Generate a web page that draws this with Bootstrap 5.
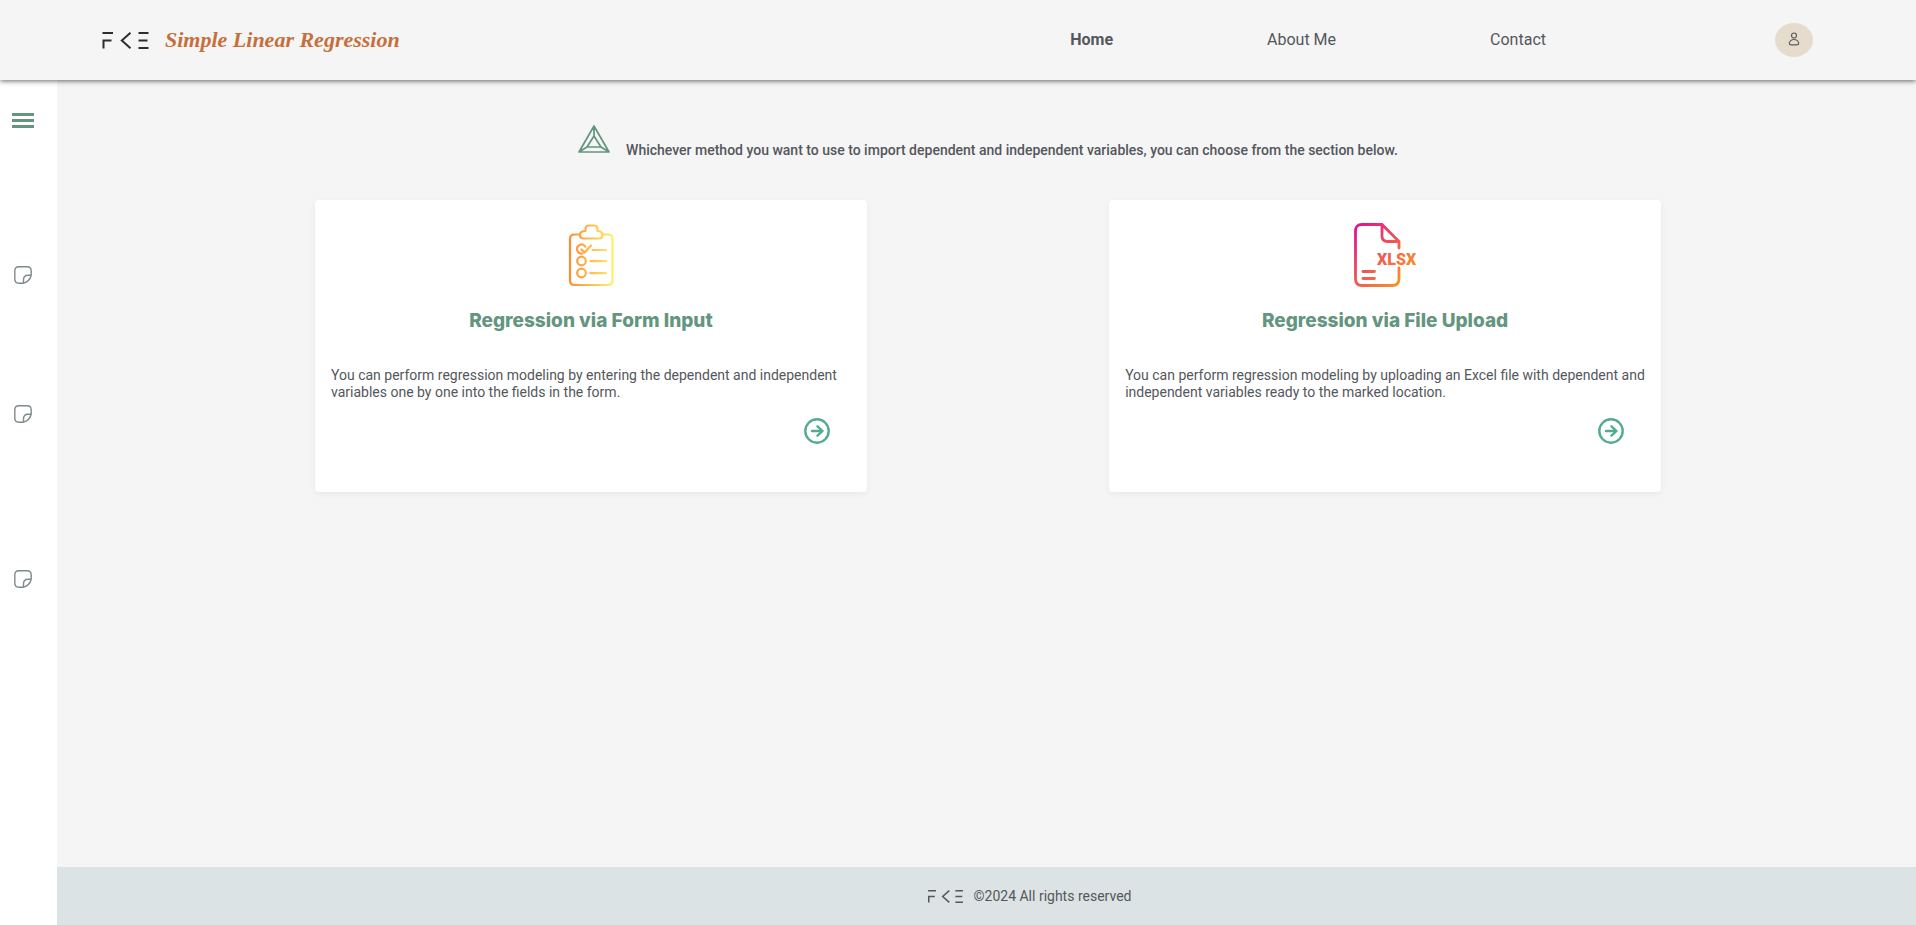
<!DOCTYPE html>
<html lang="en">
<head>
<meta charset="utf-8">
<meta name="viewport" content="width=device-width, initial-scale=1">
<title>Simple Linear Regression</title>
<link href="https://cdn.jsdelivr.net/npm/bootstrap@5.3.0/dist/css/bootstrap.min.css" rel="stylesheet">
<style>
  body { font-family: Roboto, sans-serif; font-size: 14px; line-height: 17px; color: #54575c; background: #f5f5f5; }
  svg { display: block; flex: none; }
  .site-header { min-height: 80px; padding: 0 103px 0 102px; background: #f5f5f5; box-shadow: 0 1px 5px rgba(0,0,0,.6); z-index: 2; }
  .brand-name { font-family: "Liberation Serif", serif; font-style: italic; font-weight: 700; font-size: 22px; line-height: 32px; color: #c66f3d; }
  .brand-link { gap: 16px; color: #2c2e30; }
  .main-nav { gap: 154px; margin-right: 229px; font-size: 16px; line-height: 24px; }
  .main-nav a { color: #54575c; }
  .profile-btn { width: 38px; height: 34px; padding: 0 0 3px; background: #e5dccd; border-radius: 50%; color: #5a5d60; }
  .side { width: 57px; padding: 32px 12px; background: #fff; }
  .side button { color: #7f8a8c; }
  .side .menu-toggle { color: #64957f; margin-bottom: 137px; }
  .side ul { width: 22px; gap: 121px; }
  .side li:last-child { margin-top: 26px; }
  .page-main { padding: 0 8px 0 11px; }
  .intro { gap: 16px; padding-top: 44px; font-weight: 500; }
  .intro p { padding-top: 18px; }
  .intro svg { color: #64957f; }
  .choices { max-width: 1346px; margin-top: 41px; }
  .choice { width: 41%; min-height: 292px; padding: 23px 16px 32px; border: 0; border-radius: 4px; box-shadow: 0 2px 6px rgba(0,0,0,.06); }
  .choice h2 { margin: 20px 0 32px; font: 800 19px/28px Inter, sans-serif; color: #64957f; }
  .choice .go { margin: 17px 21px 0 0; color: #54ab90; }
  .site-footer { min-height: 58px; gap: 11px; padding: 1px 0 0 86px; background: #dce3e4; }
</style>
</head>
<body class="d-flex flex-column min-vh-100">
<svg width="0" height="0" class="position-absolute" aria-hidden="true">
  <defs>
    <symbol id="logo" viewBox="0 0 46 17">
      <g fill="none" stroke="currentColor" stroke-width="2">
        <path d="M0 1h10.500M1 16.500V8.500H9M28 .8 19.300 8.500 28 16.200M36 1h10M36 8.500h9M36 16h10"/>
      </g>
    </symbol>
    <symbol id="note" viewBox="0 0 18 18">
      <g fill="none" stroke="currentColor" stroke-width="1.400" stroke-linejoin="round">
        <path d="M17.200 9.200V5Q17.200.8 13 .8H5Q.8.8.8 5V13Q.8 17.200 5 17.200H9.500C13 16.200 16.200 13 17.200 9.200ZM9.500 17.200V14Q9.500 9.200 14 9.200H17.200"/>
      </g>
    </symbol>
    <symbol id="arrow" viewBox="0 0 26 26">
      <g fill="none" stroke="currentColor" stroke-width="2.400" stroke-linecap="round" stroke-linejoin="round">
        <circle cx="13" cy="13" r="11.700"/><path d="M8 13h10.500M13.500 8.300 18.500 13l-5 4.700"/>
      </g>
    </symbol>
    <linearGradient id="amber" gradientUnits="userSpaceOnUse" x1="10" y1="0" x2="54" y2="0">
      <stop offset="0" stop-color="#fd8a35"/><stop offset="1" stop-color="#fff06a"/>
    </linearGradient>
    <linearGradient id="sunset" gradientUnits="userSpaceOnUse" x1="2" y1="6" x2="54" y2="56">
      <stop offset="0" stop-color="#e4128f"/><stop offset=".5" stop-color="#ef5556"/><stop offset="1" stop-color="#fb9526"/>
    </linearGradient>
  </defs>
</svg>

<header class="site-header d-flex align-items-center position-relative">
  <a href="#" class="brand-link d-flex align-items-center text-decoration-none me-auto">
    <svg width="47" height="17" role="img" aria-label="FKE"><use href="#logo"/></svg>
    <span class="brand-name">Simple Linear Regression</span>
  </a>
  <nav class="main-nav d-flex">
    <a href="#" class="text-decoration-none fw-bold" aria-current="page">Home</a>
    <a href="#" class="text-decoration-none">About Me</a>
    <a href="#" class="text-decoration-none">Contact</a>
  </nav>
  <button type="button" class="profile-btn border-0 d-flex align-items-center justify-content-center" aria-label="Profile">
    <svg width="12" height="14" viewBox="0 0 12 14" fill="none" stroke="currentColor" stroke-width="1.200"><circle cx="6" cy="3.500" r="2.500"/><path d="M6 7.500C3.500 7.500 1.300 9.200 1.300 11.200Q1.300 12.800 3.300 12.800H8.700Q10.700 12.800 10.700 11.200C10.700 9.200 8.500 7.500 6 7.500Z"/></svg>
  </button>
</header>

<div class="d-flex flex-grow-1">
  <aside class="side flex-shrink-0">
    <button type="button" class="menu-toggle btn p-0 border-0 d-block" aria-label="Menu">
      <svg width="22" height="17" viewBox="0 0 22 17" fill="currentColor"><path d="M0 1h22v3H0zM0 7h22v3H0zM0 13h22v3H0z"/></svg>
    </button>
    <ul class="list-unstyled d-flex flex-column align-items-center mb-0">
      <li><button type="button" class="btn p-0 border-0 d-block" aria-label="Note 1"><svg width="18" height="18"><use href="#note"/></svg></button></li>
      <li><button type="button" class="btn p-0 border-0 d-block" aria-label="Note 2"><svg width="18" height="18"><use href="#note"/></svg></button></li>
      <li><button type="button" class="btn p-0 border-0 d-block" aria-label="Note 3"><svg width="18" height="18"><use href="#note"/></svg></button></li>
    </ul>
  </aside>

  <div class="d-flex flex-column flex-grow-1">
    <main class="page-main flex-grow-1">
      <div class="intro d-flex justify-content-center">
        <svg width="32" height="30" viewBox="0 0 32 30" fill="none" stroke="currentColor" stroke-width="1.700" stroke-linejoin="round"><path d="M16 2 31 28H1ZM16 12 23 23H9ZM16 2V12M1 28 9 23M31 28 23 23"/></svg>
        <p class="mb-0">Whichever method you want to use to import dependent and independent variables, you can choose from the section below.</p>
      </div>
      <div class="choices d-flex justify-content-between mx-auto">
        <section class="choice card">
          <svg class="mx-auto" width="64" height="64" viewBox="0 0 64 64" fill="none" stroke="url(#amber)" stroke-width="2.200" stroke-linecap="round" stroke-linejoin="round">
            <path d="M21 11.500H15.500Q11 11.500 11 16V57.500Q11 62 15.500 62H49Q53.500 62 53.500 57.500V16Q53.500 11.500 49 11.500H43.500"/>
            <path d="M24.500 15.500H40Q43.500 15.500 43.500 12Q43.500 8 38.500 8V6Q38.500 2.500 35 2.500H30Q26.500 2.500 26.500 6V8Q21 8 21 12Q21 15.500 24.500 15.500Z"/>
            <circle cx="22.500" cy="38" r="4.300"/><circle cx="22.500" cy="50" r="4.300"/>
            <path d="M26.300 23.500A4.500 4.500 0 1 0 23.500 30.500M22.500 26.500 25.500 29.500 32 22.500M33.500 27H47M31.500 38.100H47M31.500 50.100H47"/>
          </svg>
          <h2 class="text-center">Regression via Form Input</h2>
          <p class="mb-0">You can perform regression modeling by entering the dependent and independent variables one by one into the fields in the form.</p>
          <a href="#" class="go align-self-end" aria-label="Open form input"><svg width="26" height="26"><use href="#arrow"/></svg></a>
        </section>
        <section class="choice card">
          <svg class="mx-auto overflow-visible" width="64" height="64" viewBox="0 0 64 64" fill="none" stroke="url(#sunset)" stroke-width="2.800" stroke-linecap="round" stroke-linejoin="round">
            <path d="M46 25V18.500L29 1.500H9Q2.500 1.500 2.500 8V56Q2.500 62.500 9 62.500H39.500Q46 62.500 46 56V45M29 1.500V13Q29 18.500 34.500 18.500H46M10 48.500H21.500M10 55.500H21.500"/>
            <text x="24" y="42" fill="url(#sunset)" stroke="none" font-family="Roboto, sans-serif" font-weight="900" font-size="16">XLSX</text>
          </svg>
          <h2 class="text-center">Regression via File Upload</h2>
          <p class="mb-0">You can perform regression modeling by uploading an Excel file with dependent and independent variables ready to the marked location.</p>
          <a href="#" class="go align-self-end" aria-label="Open file upload"><svg width="26" height="26"><use href="#arrow"/></svg></a>
        </section>
      </div>
    </main>
    <footer class="site-footer d-flex align-items-center justify-content-center">
      <svg width="35" height="13" role="img" aria-label="FKE"><use href="#logo"/></svg>
      <span>©2024 All rights reserved</span>
    </footer>
  </div>
</div>
<script src="https://cdn.jsdelivr.net/npm/bootstrap@5.3.0/dist/js/bootstrap.bundle.min.js"></script>
</body>
</html>
